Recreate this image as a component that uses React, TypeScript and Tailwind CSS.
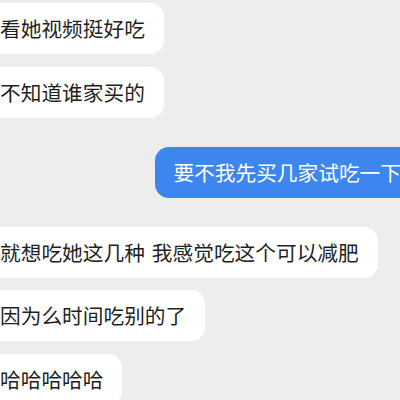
const LEFT = [
  { text: '看她视频挺好吃', mt: 'mt-[3px]' },
  { text: '不知道谁家买的', mt: 'mt-[13px]' },
]

const LATER = [
  { text: '就想吃她这几种 我感觉吃这个可以减肥', mt: 'mt-[29px]' },
  { text: '因为么时间吃别的了', mt: 'mt-[12px]' },
  { text: '哈哈哈哈哈', mt: 'mt-[13px]' },
]

function Bubble({ text, mt }: { text: string; mt: string }) {
  const parts = text.split(' ')
  return (
    <div className={`${mt} flex`}>
      <div className="-ml-[20px] h-[51px] flex items-center pl-[20px] pr-[19px] rounded-[14px] bg-white text-[#1f1f1f] whitespace-nowrap">
        {parts.map((p, i) => (
          <span key={i} className={i > 0 ? 'ml-[7px]' : ''}>
            {p}
          </span>
        ))}
      </div>
    </div>
  )
}

export default function App() {
  return (
    <div
      className="w-[400px] h-[400px] overflow-hidden bg-[#ededed] text-[20.7px] leading-none"
      style={{ fontFamily: '"Noto Sans CJK SC", "Noto Sans", sans-serif' }}
    >
      {LEFT.map((m) => (
        <Bubble key={m.text} {...m} />
      ))}

      {/* sent */}
      <div className="mt-[29px] flex justify-end">
        <div className="-mr-[21px] h-[51px] flex items-center pl-[18px] pr-[20px] rounded-[14px] bg-[#3d86f0] text-white whitespace-nowrap">
          要不我先买几家试吃一下
        </div>
      </div>

      {LATER.map((m) => (
        <Bubble key={m.text} {...m} />
      ))}
    </div>
  )
}
